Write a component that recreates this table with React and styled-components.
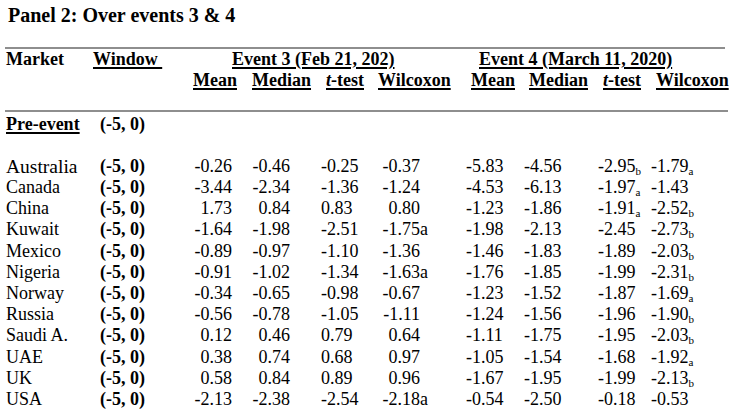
import styled, { createGlobalStyle } from "styled-components";

const GlobalStyle = createGlobalStyle`
  body {
    margin: 0;
    background: #ffffff;
  }
  #root {
    font-family: "Liberation Serif", "Times New Roman", serif;
    color: #000000;
  }
`;

// one entry per figure column: track width + how far the numbers sit from its right edge
const figureColumns = [
  { label: "Mean", w: 59, pr: 15, hang: true },
  { label: "Median", w: 74, pr: 31, hang: true },
  { label: "t-test", w: 52, pr: 24, hang: true },
  { label: "Wilcoxon", w: 93, pr: 46, hang: true },
  { label: "Mean", w: 58, pr: 35, hang: true },
  { label: "Median", w: 74, pr: 43, hang: true },
  { label: "t-test", w: 53, pr: 22, hang: false },
  { label: "Wilcoxon", w: 84, pr: 52, hang: true },
];

// "_b" = subscript letter, trailing "a" = full size letter
const rows = [
  { market: "Australia", big: true, values: ["-0.26", "-0.46", "-0.25", "-0.37", "-5.83", "-4.56", "-2.95_b", "-1.79_a"] },
  { market: "Canada", values: ["-3.44", "-2.34", "-1.36", "-1.24", "-4.53", "-6.13", "-1.97_a", "-1.43"] },
  { market: "China", values: ["1.73", "0.84", "0.83", "0.80", "-1.23", "-1.86", "-1.91_a", "-2.52_b"] },
  { market: "Kuwait", values: ["-1.64", "-1.98", "-2.51", "-1.75a", "-1.98", "-2.13", "-2.45", "-2.73_b"] },
  { market: "Mexico", values: ["-0.89", "-0.97", "-1.10", "-1.36", "-1.46", "-1.83", "-1.89", "-2.03_b"] },
  { market: "Nigeria", values: ["-0.91", "-1.02", "-1.34", "-1.63a", "-1.76", "-1.85", "-1.99", "-2.31_b"] },
  { market: "Norway", values: ["-0.34", "-0.65", "-0.98", "-0.67", "-1.23", "-1.52", "-1.87", "-1.69_a"] },
  { market: "Russia", values: ["-0.56", "-0.78", "-1.05", "-1.11", "-1.24", "-1.56", "-1.96", "-1.90_b"] },
  { market: "Saudi A.", values: ["0.12", "0.46", "0.79", "0.64", "-1.11", "-1.75", "-1.95", "-2.03_b"] },
  { market: "UAE", values: ["0.38", "0.74", "0.68", "0.97", "-1.05", "-1.54", "-1.68", "-1.92_a"] },
  { market: "UK", values: ["0.58", "0.84", "0.89", "0.96", "-1.67", "-1.95", "-1.99", "-2.13_b"] },
  { market: "USA", values: ["-2.13", "-2.38", "-2.54", "-2.18a", "-0.54", "-2.50", "-0.18", "-0.53"] },
];

const parseValue = (raw) => {
  if (raw.includes("_")) {
    const [num, sub] = raw.split("_");
    return { num, suffix: sub, sub: true };
  }
  const m = raw.match(/^(-?[\d.]+)([a-z]?)$/);
  return { num: m[1], suffix: m[2], sub: false };
};

const Label = ({ text }) =>
  text === "t-test" ? (
    <>
      <Italic>t</Italic>-test
    </>
  ) : (
    text
  );

const App = () => {
  return (
    <Page>
      <GlobalStyle />
      <Title>Panel 2: Over events 3 &amp; 4</Title>
      <Rule $w={720} $mt={21} />

      <Table $cols={figureColumns.map((c) => c.w)}>
        {/* header row 1 */}
        <HeadCell>Market</HeadCell>
        <HeadCell>
          <Underlined>Window&nbsp;</Underlined>
        </HeadCell>
        <EventHead $span={4} $pl={44}>
          <Underlined>Event 3 (Feb 21, 202)</Underlined>
        </EventHead>
        <EventHead $span={4} $pl={13}>
          <Underlined>Event 4 (March 11, 2020)</Underlined>
        </EventHead>

        {/* header row 2 */}
        <HeadCell />
        <HeadCell />
        {figureColumns.map((col, i) => (
          <SubHead key={i}>
            <Underlined>
              <Label text={col.label} />
            </Underlined>
          </SubHead>
        ))}

        <TableRule $w={723} />

        <HeadCell>
          <Underlined>Pre-event</Underlined>
        </HeadCell>
        <WindowCell>(-5, 0)</WindowCell>
        <Spacer />

        {rows.map((row) => (
          <Row key={row.market}>
            <MarketCell $big={row.big}>{row.market}</MarketCell>
            <WindowCell>(-5, 0)</WindowCell>
            {row.values.map((raw, i) => {
              const v = parseValue(raw);
              const col = figureColumns[i];
              return (
                <NumCell key={i} $pr={col.pr}>
                  {v.num}
                  {v.suffix && (
                    <Suffix $sub={v.sub} $hang={col.hang}>
                      {v.suffix}
                    </Suffix>
                  )}
                </NumCell>
              );
            })}
          </Row>
        ))}
      </Table>
    </Page>
  );
};

const Page = styled.div`
  width: 742px;
  height: 420px;
  overflow: hidden;
  box-sizing: border-box;
  padding: 4px 0 0 5px;
`;

const Title = styled.h2`
  margin: 0 0 0 3px;
  font-size: 20px;
  line-height: 22px;
  font-weight: bold;
`;

const Rule = styled.div`
  width: ${(p) => p.$w}px;
  height: 2px;
  background: #8e8e8e;
  margin-top: ${(p) => p.$mt}px;
`;

const Table = styled.div`
  display: grid;
  grid-template-columns: 87px 96px ${(p) => p.$cols.map((w) => `${w}px`).join(" ")};
  font-size: 18px;
  line-height: 21.2px;
`;

const Row = styled.div`
  display: contents;
`;

const HeadCell = styled.div`
  font-weight: bold;
  padding-left: 1px;
  white-space: nowrap;
`;

const EventHead = styled.div`
  grid-column: span ${(p) => p.$span};
  padding-left: ${(p) => p.$pl}px;
  font-weight: bold;
  white-space: nowrap;
`;

const SubHead = styled.div`
  padding-left: 5px;
  font-weight: bold;
  white-space: nowrap;
`;

const Underlined = styled.span`
  text-decoration: underline;
  text-decoration-thickness: 1.5px;
  text-underline-offset: 2px;
`;

const Italic = styled.span`
  font-style: italic;
`;

const TableRule = styled.div`
  grid-column: 1 / -1;
  width: ${(p) => p.$w}px;
  height: 2px;
  background: #8e8e8e;
  margin: 18.6px 0 1.5px;
`;

const Spacer = styled.div`
  grid-column: 1 / -1;
  height: 21px;
`;

const MarketCell = styled.div`
  padding-left: 1px;
  font-size: ${(p) => (p.$big ? "19.5px" : "18px")};
  white-space: nowrap;
`;

const WindowCell = styled.div`
  padding-left: 8px;
  font-weight: bold;
  white-space: nowrap;
`;

const NumCell = styled.div`
  text-align: right;
  padding-right: ${(p) => p.$pr}px;
  white-space: nowrap;
`;

const Suffix = styled.span`
  display: inline-block;
  width: ${(p) => (p.$hang ? "0" : "auto")};
  text-align: left;
  font-size: ${(p) => (p.$sub ? "11px" : "18px")};
  vertical-align: ${(p) => (p.$sub ? "-3px" : "baseline")};
  line-height: 1;
`;

export default App;
